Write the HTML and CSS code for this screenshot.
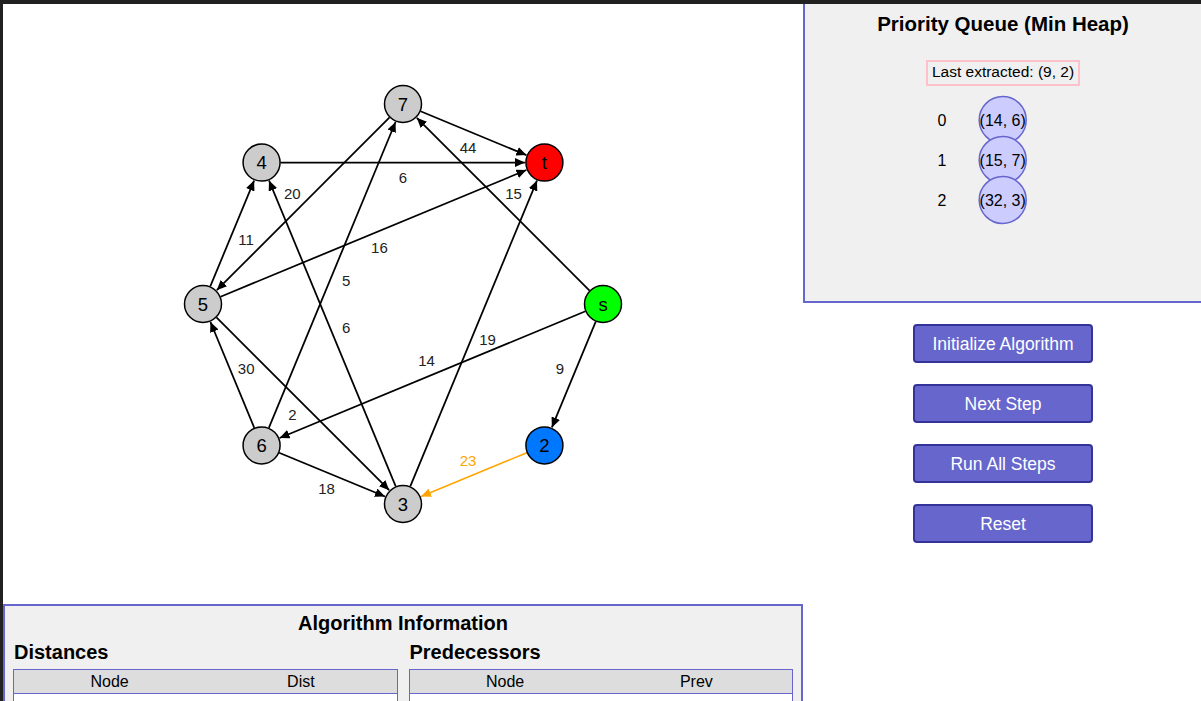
FILE: index.html
```html
<!DOCTYPE html>
<html lang="en">
<head>
<meta charset="utf-8">
<title>Dijkstra Visualizer</title>
<link rel="stylesheet" href="styles.css">
</head>
<body>
<div class="app">
  <div class="main">
    <svg class="graph" width="800" height="600" viewBox="0 0 800 600">
      <defs>
        <marker id="arrow" viewBox="0 0 10 9" refX="10" refY="4.5" markerWidth="10" markerHeight="9" markerUnits="userSpaceOnUse" orient="auto">
          <path d="M0,0 L10,4.5 L0,9 Z" class="arrow-head"/>
        </marker>
        <marker id="arrow-hl" viewBox="0 0 10 9" refX="10" refY="4.5" markerWidth="10" markerHeight="9" markerUnits="userSpaceOnUse" orient="auto">
          <path d="M0,0 L10,4.5 L0,9 Z" class="arrow-head-hl"/>
        </marker>
      </defs>
      <g class="edges">
        <line x1="417.55" y1="107.27" x2="523.40" y2="151.12" class="edge"/>
        <line x1="277.58" y1="158.58" x2="521.92" y2="158.58" class="edge"/>
        <line x1="217.55" y1="292.73" x2="523.40" y2="166.04" class="edge"/>
        <line x1="407.27" y1="482.45" x2="533.96" y2="176.60" class="edge"/>
        <line x1="586.56" y1="286.56" x2="413.79" y2="113.79" class="edge"/>
        <line x1="582.45" y1="307.27" x2="276.60" y2="433.96" class="edge"/>
        <line x1="207.27" y1="282.45" x2="251.12" y2="176.60" class="edge"/>
        <line x1="386.56" y1="113.44" x2="213.79" y2="286.21" class="edge"/>
        <line x1="392.73" y1="482.45" x2="266.04" y2="176.60" class="edge"/>
        <line x1="265.85" y1="423.87" x2="392.54" y2="118.02" class="edge"/>
        <line x1="251.31" y1="423.87" x2="207.46" y2="318.02" class="edge"/>
        <line x1="213.44" y1="313.44" x2="386.21" y2="486.21" class="edge"/>
        <line x1="276.13" y1="448.69" x2="381.98" y2="492.54" class="edge"/>
        <line x1="592.73" y1="317.55" x2="548.88" y2="423.40" class="edge"/>
        <line x1="523.87" y1="448.69" x2="418.02" y2="492.54" class="edge edge-hl"/>
      </g>
      <g class="weights">
        <text x="464.97" y="143.15">44</text>
        <text x="400" y="173.58">6</text>
        <text x="376.45" y="243.15">16</text>
        <text x="484.57" y="335.03">19</text>
        <text x="510.61" y="189.39">15</text>
        <text x="423.55" y="356.85">14</text>
        <text x="243.15" y="235.03">11</text>
        <text x="289.39" y="189.39">20</text>
        <text x="343.15" y="323.55">6</text>
        <text x="343.15" y="276.45">5</text>
        <text x="243.15" y="364.97">30</text>
        <text x="289.39" y="410.61">2</text>
        <text x="323.55" y="484.57">18</text>
        <text x="556.85" y="364.97">9</text>
        <text x="464.97" y="456.85" class="weight-hl">23</text>
      </g>
      <g class="nodes">
        <g class="node"><circle cx="400" cy="100" r="18.5"/><text x="400" y="100">7</text></g>
        <g class="node node-target"><circle cx="541.42" cy="158.58" r="18.5"/><text x="541.42" y="158.58">t</text></g>
        <g class="node node-source"><circle cx="600" cy="300" r="18.5"/><text x="600" y="300">s</text></g>
        <g class="node node-current"><circle cx="541.42" cy="441.42" r="18.5"/><text x="541.42" y="441.42">2</text></g>
        <g class="node"><circle cx="400" cy="500" r="18.5"/><text x="400" y="500">3</text></g>
        <g class="node"><circle cx="258.58" cy="441.42" r="18.5"/><text x="258.58" y="441.42">6</text></g>
        <g class="node"><circle cx="200" cy="300" r="18.5"/><text x="200" y="300">5</text></g>
        <g class="node"><circle cx="258.58" cy="158.58" r="18.5"/><text x="258.58" y="158.58">4</text></g>
      </g>
    </svg>

    <section class="info">
      <h2 class="info-title">Algorithm Information</h2>
      <div class="tables">
        <div class="tbl-block">
          <h3 class="tbl-title">Distances</h3>
          <table class="data">
            <thead><tr><th>Node</th><th>Dist</th></tr></thead>
            <tbody>
              <tr><td>s</td><td>0</td></tr>
              <tr><td>2</td><td>9</td></tr>
              <tr><td>3</td><td>32</td></tr>
              <tr><td>4</td><td>∞</td></tr>
              <tr><td>5</td><td>∞</td></tr>
              <tr><td>6</td><td>14</td></tr>
              <tr><td>7</td><td>15</td></tr>
              <tr><td>t</td><td>∞</td></tr>
            </tbody>
          </table>
        </div>
        <div class="tbl-block">
          <h3 class="tbl-title">Predecessors</h3>
          <table class="data">
            <thead><tr><th>Node</th><th>Prev</th></tr></thead>
            <tbody>
              <tr><td>s</td><td>-</td></tr>
              <tr><td>2</td><td>s</td></tr>
              <tr><td>3</td><td>2</td></tr>
              <tr><td>4</td><td>-</td></tr>
              <tr><td>5</td><td>-</td></tr>
              <tr><td>6</td><td>s</td></tr>
              <tr><td>7</td><td>s</td></tr>
              <tr><td>t</td><td>-</td></tr>
            </tbody>
          </table>
        </div>
      </div>
    </section>
  </div>

  <aside class="side">
    <section class="pq">
      <h2 class="pq-title">Priority Queue (Min Heap)</h2>
      <div class="last">Last extracted: (9, 2)</div>
      <svg class="heap" width="396" height="140" viewBox="0 0 396 140">
        <g class="heap-item"><text x="137" y="34" class="heap-index">0</text><circle cx="197.7" cy="34" r="23.5"/><text x="197.7" y="34">(14, 6)</text></g>
        <g class="heap-item"><text x="137" y="74" class="heap-index">1</text><circle cx="197.7" cy="74" r="23.5"/><text x="197.7" y="74">(15, 7)</text></g>
        <g class="heap-item"><text x="137" y="114" class="heap-index">2</text><circle cx="197.7" cy="114" r="23.5"/><text x="197.7" y="114">(32, 3)</text></g>
      </svg>
    </section>
    <div class="controls">
      <button class="btn" type="button">Initialize Algorithm</button>
      <button class="btn" type="button">Next Step</button>
      <button class="btn" type="button">Run All Steps</button>
      <button class="btn" type="button">Reset</button>
    </div>
  </aside>
</div>
</body>
</html>
```

FILE: styles.css
```css
html, body {
  margin: 0;
  padding: 0;
}

body {
  background: #212121;
  overflow: hidden;
  font-family: "Liberation Sans", Arial, Helvetica, sans-serif;
  color: #000;
}

.app {
  display: flex;
  width: 1200px;
  min-height: 720px;
  margin: 4px 0 0 3px;
  background: #fff;
}

.main {
  flex: none;
  width: 800px;
}

.graph {
  display: block;
}

/* graph */
.edge {
  stroke: #000;
  stroke-width: 1.75;
  marker-end: url(#arrow);
}

.edge-hl {
  stroke: #ffa500;
  stroke-width: 1.5;
  marker-end: url(#arrow-hl);
}

.arrow-head {
  fill: #000;
}

.arrow-head-hl {
  fill: #ffa500;
}

.weights text {
  font-size: 15px;
  fill: #222;
  text-anchor: middle;
  dominant-baseline: central;
}

.weights .weight-hl {
  fill: #ffa500;
}

.node circle {
  fill: #cccccc;
  stroke: #000;
  stroke-width: 1.5;
}

.node text {
  font-size: 18.5px;
  fill: #000;
  text-anchor: middle;
  dominant-baseline: central;
}

.node-target circle {
  fill: #ff0000;
}

.node-source circle {
  fill: #00ff00;
}

.node-current circle {
  fill: #0077ff;
}

/* info panel */
.info {
  box-sizing: border-box;
  width: 800px;
  border: 2px solid #6666cc;
  background: #f0f0f0;
  padding: 0 8px 8px;
}

.info-title {
  margin: 0;
  padding-top: 5.5px;
  font-size: 20px;
  line-height: 23px;
  text-align: center;
}

.tables {
  display: grid;
  grid-template-columns: 1fr 1fr;
  column-gap: 11px;
}

.tbl-title {
  margin: 6px 0 5.5px 1px;
  font-size: 20px;
  line-height: 23px;
}

.data {
  width: 100%;
  table-layout: fixed;
  border-collapse: collapse;
  border: 1px solid #6666cc;
  font-size: 16px;
}

.data th {
  background: #dddddd;
  font-weight: normal;
  padding: 2px 4px;
  line-height: 19px;
  border-bottom: 1px solid #6666cc;
}

.data td {
  background: #fff;
  text-align: center;
  padding: 9px 4px 2px;
  line-height: 19px;
}

/* side column */
.side {
  flex: none;
  width: 400px;
}

.pq {
  box-sizing: border-box;
  height: 299px;
  border: 2px solid #6666cc;
  border-top: 0;
  background: #f0f0f0;
  display: flex;
  flex-direction: column;
  align-items: center;
}

.pq-title {
  margin: 0;
  padding-top: 7.5px;
  font-size: 20.5px;
  line-height: 23px;
  text-align: center;
}

.last {
  margin-top: 25.5px;
  border: 2px solid #ffc0cb;
  padding: 1px 4px 3px;
  font-size: 15.5px;
  line-height: 18px;
}

.heap {
  display: block;
  align-self: stretch;
}

.heap text {
  font-size: 16px;
  fill: #000;
  text-anchor: middle;
  dominant-baseline: central;
}

.heap circle {
  fill: #ccccff;
  stroke: #6666cc;
  stroke-width: 1.5;
}

.controls {
  display: flex;
  flex-direction: column;
  align-items: center;
  gap: 21px;
  padding-top: 21px;
}

.btn {
  box-sizing: border-box;
  width: 180px;
  height: 39px;
  padding: 1px 0 0;
  background: #6666cc;
  color: #fff;
  border: 2px solid #333399;
  border-radius: 4px;
  font-family: "Liberation Sans", Arial, Helvetica, sans-serif;
  font-size: 17.5px;
}
```
